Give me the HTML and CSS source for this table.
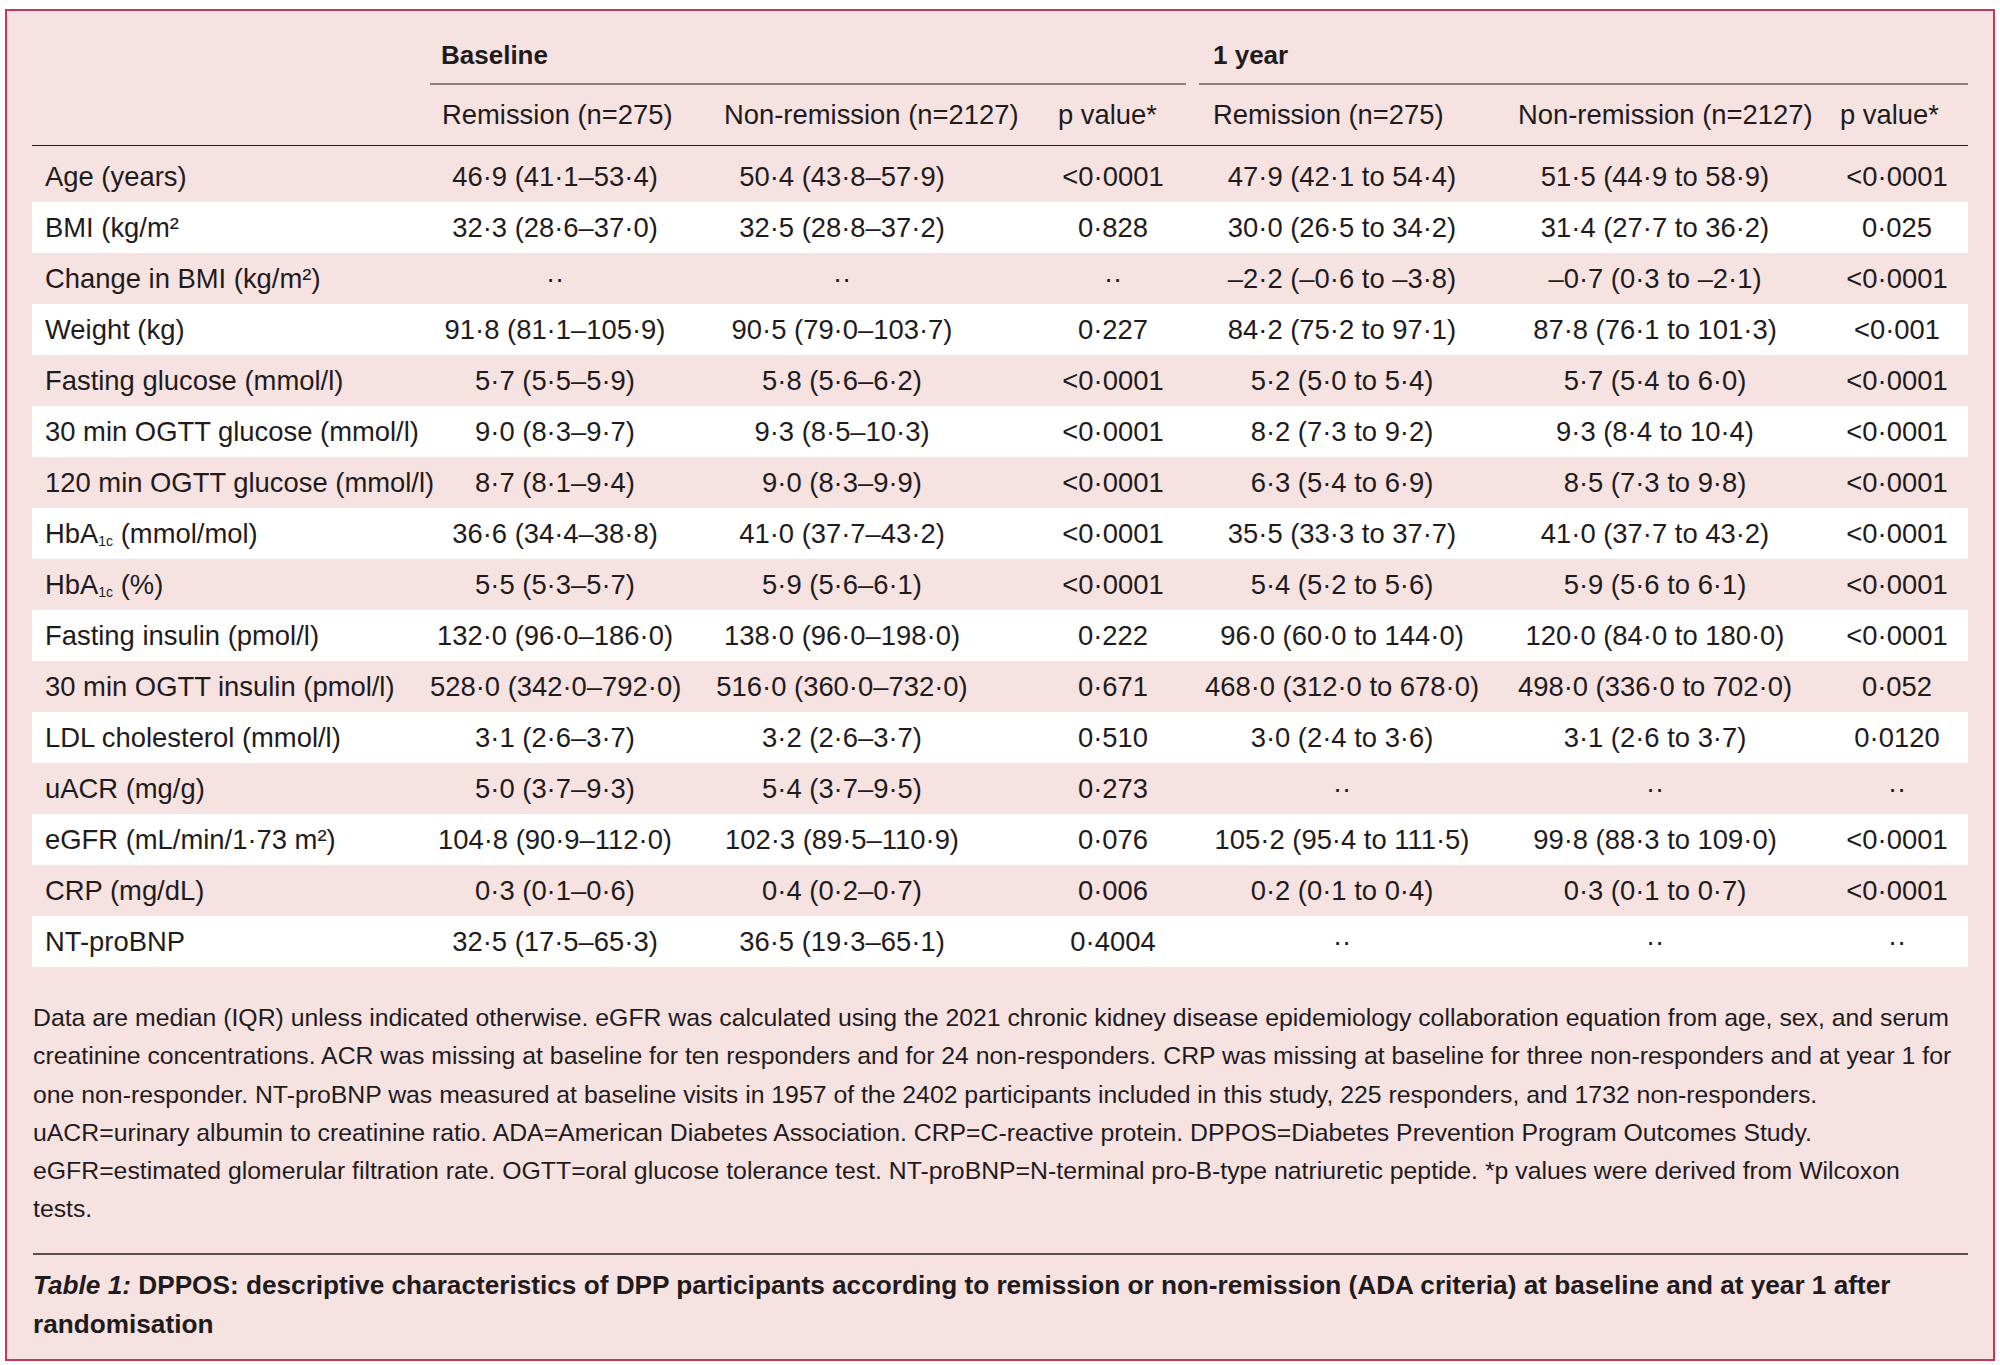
FILE: index.html
```html
<!DOCTYPE html>
<html lang="en">
<head>
<meta charset="utf-8">
<title>Table 1: DPPOS</title>
<link rel="stylesheet" href="styles.css">
</head>
<body>
<div class="panel">
  <div class="tbl">
    <div class="row grp">
      <div class="cell"></div>
      <div class="cell g1">Baseline</div>
      <div class="cell g2">1 year</div>
    </div>
    <div class="row sub">
      <div class="cell"></div>
      <div class="cell">Remission (n=275)</div>
      <div class="cell">Non-remission (n=2127)</div>
      <div class="cell">p value*</div>
      <div class="cell">Remission (n=275)</div>
      <div class="cell">Non-remission (n=2127)</div>
      <div class="cell">p value*</div>
    </div>
    <div class="body">
      <div class="row d"><div class="cell">Age (years)</div><div class="cell">46·9 (41·1–53·4)</div><div class="cell">50·4 (43·8–57·9)</div><div class="cell">&lt;0·0001</div><div class="cell">47·9 (42·1 to 54·4)</div><div class="cell">51·5 (44·9 to 58·9)</div><div class="cell">&lt;0·0001</div></div>
      <div class="row d w"><div class="cell">BMI (kg/m²</div><div class="cell">32·3 (28·6–37·0)</div><div class="cell">32·5 (28·8–37·2)</div><div class="cell">0·828</div><div class="cell">30·0 (26·5 to 34·2)</div><div class="cell">31·4 (27·7 to 36·2)</div><div class="cell">0·025</div></div>
      <div class="row d"><div class="cell">Change in BMI (kg/m²)</div><div class="cell">··</div><div class="cell">··</div><div class="cell">··</div><div class="cell">–2·2 (–0·6 to –3·8)</div><div class="cell">–0·7 (0·3 to –2·1)</div><div class="cell">&lt;0·0001</div></div>
      <div class="row d w"><div class="cell">Weight (kg)</div><div class="cell">91·8 (81·1–105·9)</div><div class="cell">90·5 (79·0–103·7)</div><div class="cell">0·227</div><div class="cell">84·2 (75·2 to 97·1)</div><div class="cell">87·8 (76·1 to 101·3)</div><div class="cell">&lt;0·001</div></div>
      <div class="row d"><div class="cell">Fasting glucose (mmol/l)</div><div class="cell">5·7 (5·5–5·9)</div><div class="cell">5·8 (5·6–6·2)</div><div class="cell">&lt;0·0001</div><div class="cell">5·2 (5·0 to 5·4)</div><div class="cell">5·7 (5·4 to 6·0)</div><div class="cell">&lt;0·0001</div></div>
      <div class="row d w"><div class="cell">30 min OGTT glucose (mmol/l)</div><div class="cell">9·0 (8·3–9·7)</div><div class="cell">9·3 (8·5–10·3)</div><div class="cell">&lt;0·0001</div><div class="cell">8·2 (7·3 to 9·2)</div><div class="cell">9·3 (8·4 to 10·4)</div><div class="cell">&lt;0·0001</div></div>
      <div class="row d"><div class="cell">120 min OGTT glucose (mmol/l)</div><div class="cell">8·7 (8·1–9·4)</div><div class="cell">9·0 (8·3–9·9)</div><div class="cell">&lt;0·0001</div><div class="cell">6·3 (5·4 to 6·9)</div><div class="cell">8·5 (7·3 to 9·8)</div><div class="cell">&lt;0·0001</div></div>
      <div class="row d w"><div class="cell">HbA<sub>1c</sub> (mmol/mol)</div><div class="cell">36·6 (34·4–38·8)</div><div class="cell">41·0 (37·7–43·2)</div><div class="cell">&lt;0·0001</div><div class="cell">35·5 (33·3 to 37·7)</div><div class="cell">41·0 (37·7 to 43·2)</div><div class="cell">&lt;0·0001</div></div>
      <div class="row d"><div class="cell">HbA<sub>1c</sub> (%)</div><div class="cell">5·5 (5·3–5·7)</div><div class="cell">5·9 (5·6–6·1)</div><div class="cell">&lt;0·0001</div><div class="cell">5·4 (5·2 to 5·6)</div><div class="cell">5·9 (5·6 to 6·1)</div><div class="cell">&lt;0·0001</div></div>
      <div class="row d w"><div class="cell">Fasting insulin (pmol/l)</div><div class="cell">132·0 (96·0–186·0)</div><div class="cell">138·0 (96·0–198·0)</div><div class="cell">0·222</div><div class="cell">96·0 (60·0 to 144·0)</div><div class="cell">120·0 (84·0 to 180·0)</div><div class="cell">&lt;0·0001</div></div>
      <div class="row d"><div class="cell">30 min OGTT insulin (pmol/l)</div><div class="cell">528·0 (342·0–792·0)</div><div class="cell">516·0 (360·0–732·0)</div><div class="cell">0·671</div><div class="cell">468·0 (312·0 to 678·0)</div><div class="cell">498·0 (336·0 to 702·0)</div><div class="cell">0·052</div></div>
      <div class="row d w"><div class="cell">LDL cholesterol (mmol/l)</div><div class="cell">3·1 (2·6–3·7)</div><div class="cell">3·2 (2·6–3·7)</div><div class="cell">0·510</div><div class="cell">3·0 (2·4 to 3·6)</div><div class="cell">3·1 (2·6 to 3·7)</div><div class="cell">0·0120</div></div>
      <div class="row d"><div class="cell">uACR (mg/g)</div><div class="cell">5·0 (3·7–9·3)</div><div class="cell">5·4 (3·7–9·5)</div><div class="cell">0·273</div><div class="cell">··</div><div class="cell">··</div><div class="cell">··</div></div>
      <div class="row d w"><div class="cell">eGFR (mL/min/1·73 m²)</div><div class="cell">104·8 (90·9–112·0)</div><div class="cell">102·3 (89·5–110·9)</div><div class="cell">0·076</div><div class="cell">105·2 (95·4 to 111·5)</div><div class="cell">99·8 (88·3 to 109·0)</div><div class="cell">&lt;0·0001</div></div>
      <div class="row d"><div class="cell">CRP (mg/dL)</div><div class="cell">0·3 (0·1–0·6)</div><div class="cell">0·4 (0·2–0·7)</div><div class="cell">0·006</div><div class="cell">0·2 (0·1 to 0·4)</div><div class="cell">0·3 (0·1 to 0·7)</div><div class="cell">&lt;0·0001</div></div>
      <div class="row d w"><div class="cell">NT-proBNP</div><div class="cell">32·5 (17·5–65·3)</div><div class="cell">36·5 (19·3–65·1)</div><div class="cell">0·4004</div><div class="cell">··</div><div class="cell">··</div><div class="cell">··</div></div>
    </div>
  </div>
  <p class="notes">Data are median (IQR) unless indicated otherwise. eGFR was calculated using the 2021 chronic kidney disease epidemiology collaboration equation from age, sex, and serum<br>creatinine concentrations. ACR was missing at baseline for ten responders and for 24 non-responders. CRP was missing at baseline for three non-responders and at year 1 for<br>one non-responder. NT-proBNP was measured at baseline visits in 1957 of the 2402 participants included in this study, 225 responders, and 1732 non-responders.<br>uACR=urinary albumin to creatinine ratio. ADA=American Diabetes Association. CRP=C-reactive protein. DPPOS=Diabetes Prevention Program Outcomes Study.<br>eGFR=estimated glomerular filtration rate. OGTT=oral glucose tolerance test. NT-proBNP=N-terminal pro-B-type natriuretic peptide. *p values were derived from Wilcoxon<br>tests.</p>
  <p class="caption"><i>Table 1:</i> DPPOS: descriptive characteristics of DPP participants according to remission or non-remission (ADA criteria) at baseline and at year 1 after<br>randomisation</p>
</div>
</body>
</html>
```

FILE: styles.css
```css
html, body {
  margin: 0;
  padding: 0;
  background: #ffffff;
}

body {
  font-family: "Liberation Sans", Arial, sans-serif;
  color: #1f1b1c;
}

.panel {
  box-sizing: border-box;
  width: 1990px;
  height: 1352px;
  margin: 9px 0 0 5px;
  padding: 0 25px;
  background: #f6e2e1;
  border: 2px solid #c4365c;
}

.tbl {
  width: 1936px;
}

.row {
  display: grid;
  grid-template-columns: 398px 282px 334px 140px 13px 306px 322px 141px;
}

.cell {
  white-space: nowrap;
}

/* group header row */
.grp {
  font-weight: bold;
  font-size: 26px;
  line-height: 30px;
}

.grp .cell {
  padding-top: 29px;
  padding-bottom: 13px;
}

.grp .g1 {
  grid-column: 2 / 5;
  padding-left: 11px;
  border-bottom: 2px solid #8c8181;
}

.grp .g2 {
  grid-column: 6 / 9;
  padding-left: 14px;
  border-bottom: 2px solid #8c8181;
}

/* sub header row */
.sub {
  font-size: 27.4px;
  line-height: 30px;
  border-bottom: 1px solid #231f20;
}

.sub .cell {
  padding: 15px 0 15px 12px;
}

.sub > :nth-child(5) {
  grid-column: 6;
  padding-left: 14px;
}

.sub > :nth-child(6) {
  padding-left: 13px;
}

.sub > :nth-child(7) {
  padding-left: 13px;
}

/* body rows */
.body {
  padding-top: 5px;
}

.d {
  font-size: 27.4px;
  line-height: 51px;
  height: 51px;
}

.d.w {
  background: #ffffff;
}

.d .cell {
  text-align: center;
}

.d > :nth-child(1) {
  text-align: left;
  padding-left: 13px;
}

.d > :nth-child(2) { padding-right: 32px; }
.d > :nth-child(3) { padding-right: 74px; }
.d > :nth-child(4) { padding-right: 6px; }
.d > :nth-child(5) { grid-column: 6; padding-right: 20px; }
.d > :nth-child(6) { padding-right: 22px; }
.d > :nth-child(7) { padding-right: 1px; }

sub {
  font-size: 14px;
  line-height: 0;
  vertical-align: -3px;
}

/* footnotes */
.notes {
  margin: 32px 0 0 1px;
  font-size: 24.8px;
  line-height: 38.3px;
  white-space: nowrap;
  padding-bottom: 24px;
  border-bottom: 2px solid #5a5050;
}

.caption {
  margin: 11px 0 0 1px;
  font-size: 26.2px;
  line-height: 39px;
  font-weight: bold;
  white-space: nowrap;
}
```
